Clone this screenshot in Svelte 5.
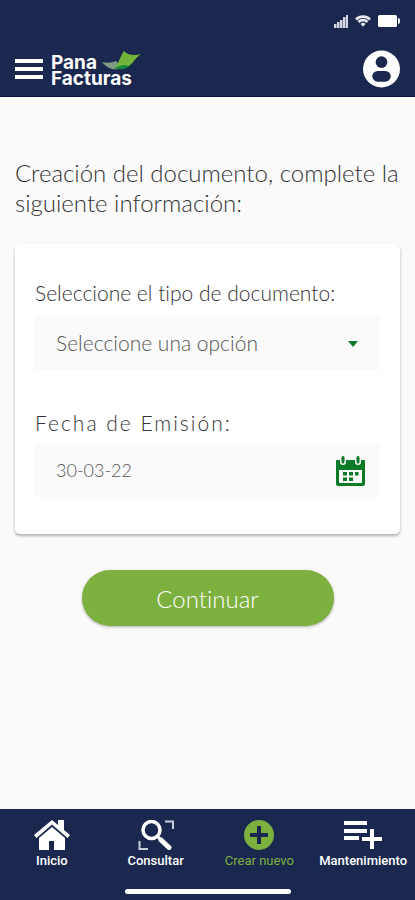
<script lang="ts">
  let documentType = $state('');
  let issueDate = $state('30-03-22');

  const tabs = [
    { label: 'Inicio', href: '#inicio', icon: 'home' },
    { label: 'Consultar', href: '#consultar', icon: 'search' },
    { label: 'Crear nuevo', href: '#crear', icon: 'create' },
    { label: 'Mantenimiento', href: '#mantenimiento', icon: 'list' },
  ];
</script>

<div class="screen">
  <header class="header">
    <div class="status">
      <svg width="14" height="13" viewBox="0 0 14 13" fill="#d5d8e2" aria-hidden="true">
        <path d="M0 9h2.500v4H0zM3 7h2.500v6H3zM6 5h2.500v8H6zM9 2h2.500v11H9zM12 0h2v13h-2z" />
      </svg>
      <svg width="16" height="12" viewBox="0 0 16 12" fill="none" aria-hidden="true">
        <path d="M1 4.5a10 10 0 0 1 14 0M3.5 7a6.4 6.4 0 0 1 9 0" stroke="#e8eaf0" stroke-width="2.6" />
        <path d="M5.5 9a3.6 3.6 0 0 1 5 0L8 11.8z" fill="#e8eaf0" />
      </svg>
      <svg width="22" height="12" viewBox="0 0 22 12" fill="#fff" aria-hidden="true">
        <rect x="0" y="0" width="19" height="12" rx="1.5" />
        <path d="M20 3a2 3 0 0 1 0 6z" />
      </svg>
    </div>
    <div class="bar">
      <button class="icon-button" aria-label="Abrir menú">
        <svg width="28" height="20" viewBox="0 0 28 20" fill="#fff">
          <path d="M0 0h28v4H0zM0 8h28v4H0zM0 16h28v4H0z" />
        </svg>
      </button>
      <a class="brand" href="#inicio">
        <span class="brand-top">
          Pana
          <svg width="39" height="20" viewBox="0 0 39 20" aria-hidden="true">
            <path d="M0 11C5 12 9 12 14 10L21 17C12 20 6 18 0 11Z" fill="#7d9b86" />
            <path d="M12 17L18 13L31 11C27 17 21 20 12 17Z" fill="#16873b" />
            <path d="M12 17C17 13 18 5 22 0C26 4 31 5 39 3C33 7 31 13 26 15C20 12 17 16 12 17Z" fill="#72b43b" />
          </svg>
        </span>
        <span>Facturas</span>
      </a>
      <button class="icon-button profile" aria-label="Perfil">
        <svg width="37" height="38" viewBox="0 0 38 38">
          <circle cx="19" cy="19" r="19" fill="#fff" />
          <circle cx="19" cy="12" r="6" fill="#1a2850" />
          <rect x="9.500" y="21" width="19" height="11" rx="5.500" fill="#1a2850" />
        </svg>
      </button>
    </div>
  </header>

  <main class="content">
    <h1>Creación del documento, complete la siguiente información:</h1>

    <form class="form" onsubmit={(e) => e.preventDefault()}>
      <div class="card">
        <div class="field">
          <label for="document-type">Seleccione el tipo de documento:</label>
          <div class="control">
            <select id="document-type" bind:value={documentType}>
              <option value="">Seleccione una opción</option>
              <option value="factura">Factura</option>
            </select>
            <svg class="arrow" width="10" height="6" viewBox="0 0 10 6" fill="#0b7a27" aria-hidden="true">
              <path d="M0 0h10L5 6z" />
            </svg>
          </div>
        </div>

        <div class="field date">
          <label for="issue-date">Fecha de Emisión:</label>
          <div class="control">
            <input id="issue-date" type="text" bind:value={issueDate} />
            <svg class="calendar" width="29" height="30" viewBox="0 0 29 30" aria-hidden="true">
              <path fill="#0b7a27" fill-rule="evenodd" d="M1 4h3v2a3 3 0 0 0 6 0V4h9v2a3 3 0 0 0 6 0V4h3a1 1 0 0 1 1 1v23a2 2 0 0 1-2 2H2a2 2 0 0 1-2-2V5a1 1 0 0 1 1-1zM3 14v12a1 1 0 0 0 1 1h21a1 1 0 0 0 1-1V14z" />
              <path d="M7 1.500V6M22 1.500V6" stroke="#0b7a27" stroke-width="3" stroke-linecap="round" />
              <path fill="#0b7a27" d="M7 16h4v3.500H7zM13 16h4v3.500h-4zM19 16h3.500v3.500H19zM7 21.500h4V25H7zM13 21.500h4V25h-4z" />
            </svg>
          </div>
        </div>
      </div>

      <button class="submit" type="submit">Continuar</button>
    </form>
  </main>

  <footer class="footer">
    <nav class="tabs">
      {#each tabs as tab}
        <a href={tab.href} class="tab" class:active={tab.icon === 'create'}>
          {#if tab.icon === 'home'}
            <svg width="36" height="30" viewBox="0 0 36 30" fill="#fff" aria-hidden="true">
              <path d="M18 0L24 5V0h6v10l6 5-2.500 3L18 4.500 2.500 18 0 15z" />
              <path d="M18 7l13 11v12H20v-9h-5v9H5V18z" />
            </svg>
          {:else if tab.icon === 'search'}
            <svg width="36" height="30" viewBox="0 0 36 30" fill="none" stroke="#fff" aria-hidden="true">
              <circle cx="13.5" cy="10" r="8.5" stroke-width="3.500" />
              <path d="M19.5 16.5l3 3" stroke-width="3" />
              <path d="M23 20l8 7.500" stroke-width="5" stroke-linecap="round" />
              <path d="M27 1.500h8V9M1.500 21v8H10" stroke-width="2" stroke="#c9cedb" />
            </svg>
          {:else if tab.icon === 'create'}
            <svg width="30" height="30" viewBox="0 0 30 30" aria-hidden="true">
              <circle cx="15" cy="15" r="15" fill="#7cb03f" />
              <path d="M15 6v18M6 15h18" stroke="#1a2850" stroke-width="4" />
            </svg>
          {:else}
            <svg width="38" height="30" viewBox="0 0 38 30" fill="#fff" aria-hidden="true">
              <path d="M0 1h23v4H0zM0 9h23v4H0zM0 16h15v4H0zM26 9h4v8h8v4h-8v8h-4v-8h-8v-4h8z" />
            </svg>
          {/if}
          <span>{tab.label}</span>
        </a>
      {/each}
    </nav>
    <div class="home-indicator"></div>
  </footer>
</div>

<style>
  :global(body) {
    margin: 0;
  }

  .screen {
    min-height: 100vh;
    display: flex;
    flex-direction: column;
    background: #fafafa;
    color: #333;
    font-family: Lato, 'Open Sans', sans-serif;
    font-weight: 300;
    font-variant-ligatures: none;
  }

  .screen * {
    box-sizing: border-box;
  }

  svg {
    display: block;
    flex: none;
  }

  button,
  input,
  select {
    border: 0;
    font: inherit;
  }

  button {
    padding: 0;
    cursor: pointer;
  }

  .header {
    padding: 14px 15px 8px;
    background: #1a2850;
    border-bottom: 1px solid #08123a;
  }

  .status {
    display: flex;
    align-items: center;
    justify-content: flex-end;
    gap: 7px;
    height: 14px;
  }

  .bar {
    display: flex;
    align-items: center;
    margin-top: 22px;
    height: 38px;
  }

  .icon-button {
    background: none;
  }

  .profile {
    margin-left: auto;
  }

  .brand {
    display: flex;
    flex-direction: column;
    margin-left: 8px;
    color: #fff;
    font-family: Inter, sans-serif;
    font-size: 19px;
    font-weight: 700;
    line-height: 16px;
    text-decoration: none;
  }

  .brand-top {
    display: flex;
    align-items: flex-end;
    gap: 5px;
  }

  .content {
    flex: 1;
    padding: 61px 15px 32px;
  }

  h1 {
    margin: 0;
    font-size: 24px;
    font-weight: 300;
    line-height: 30px;
  }

  .form {
    margin-top: 26px;
  }

  .card {
    display: flex;
    flex-direction: column;
    gap: 41px;
    padding: 37px 20px;
    background: #fff;
    border-radius: 5px;
    box-shadow: 0 2px 3px rgba(0, 0, 0, 0.3);
  }

  .field {
    display: flex;
    flex-direction: column;
    gap: 12px;
  }

  .field.date {
    gap: 9px;
  }

  label {
    font-size: 21px;
    line-height: 24px;
  }

  .date label {
    letter-spacing: 2px;
  }

  .control {
    display: flex;
    align-items: center;
    position: relative;
  }

  select,
  input {
    width: 100%;
    height: 53px;
    padding: 0 50px 2px 21px;
    background: #fafafa;
    border-radius: 0;
    color: #555;
    appearance: none;
  }

  select {
    font-size: 21px;
  }

  input {
    font-size: 18px;
  }

  .arrow,
  .calendar {
    position: absolute;
    pointer-events: none;
  }

  .arrow {
    right: 22px;
  }

  .calendar {
    right: 15px;
  }

  .submit {
    display: block;
    width: 252px;
    height: 56px;
    margin: 36px auto 0;
    background: #7eb03f;
    border-radius: 28px;
    box-shadow: 0 1px 3px rgba(0, 0, 0, 0.3);
    color: #fff;
    font-size: 24px;
  }

  .footer {
    padding: 11px 0 6px;
    background: #1a2850;
  }

  .tabs {
    display: flex;
  }

  .tab {
    flex: 1;
    display: flex;
    flex-direction: column;
    align-items: center;
    gap: 3px;
    color: #fff;
    font-family: Roboto, sans-serif;
    font-size: 13px;
    font-weight: 500;
    line-height: 16px;
    text-decoration: none;
  }

  .tab.active {
    color: #7cb03f;
    font-weight: 400;
  }

  .home-indicator {
    width: 40%;
    height: 5px;
    margin: 20px auto 0;
    background: #fff;
    border-radius: 3px;
  }
</style>
